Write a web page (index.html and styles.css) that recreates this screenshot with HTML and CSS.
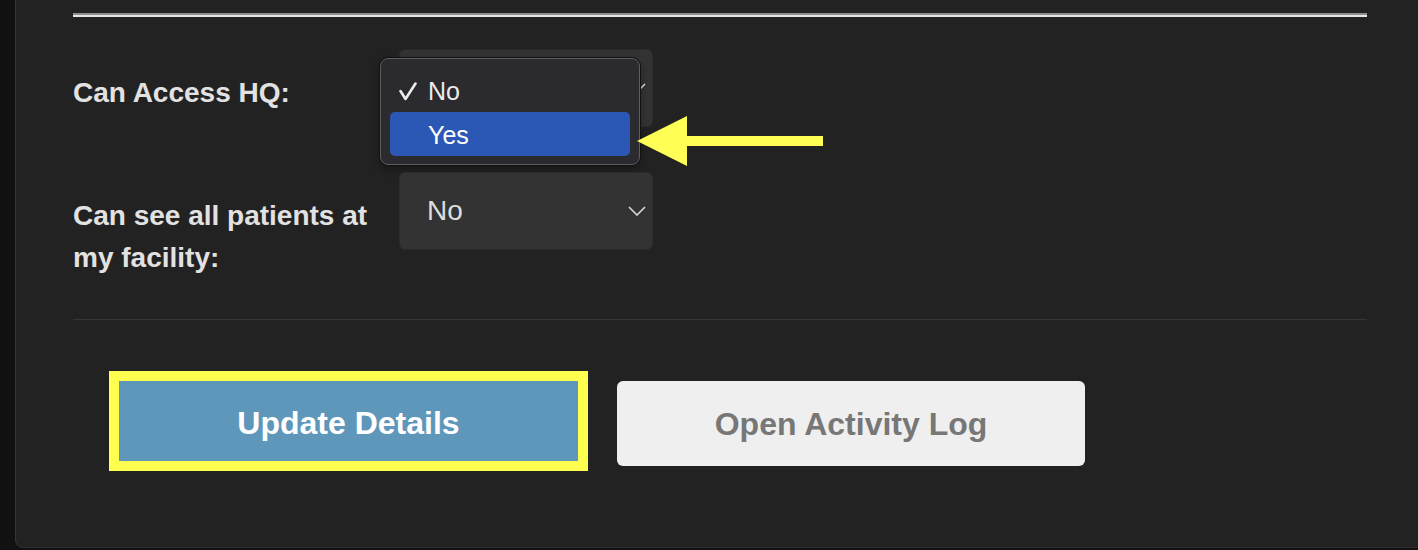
FILE: index.html
```html
<!DOCTYPE html>
<html lang="en">
<head>
<meta charset="utf-8">
<title>User Details</title>
<link rel="stylesheet" href="styles.css">
</head>
<body>
<div class="panel">
  <hr class="top-rule">
  <div class="row row-first">
    <div class="label">Can Access HQ:</div>
    <div class="select">
      <span class="select-value">No</span>
      <svg class="chev" width="18" height="10" viewBox="0 0 18 10"><polyline points="1,1 9,9 17,1" fill="none" stroke="#d8d8d8" stroke-width="1.6"/></svg>
    </div>
    <div class="menu">
      <div class="menu-item">
        <svg class="check" width="18" height="19" viewBox="0 0 18 19"><polyline points="1.5,9 6.5,17 16.5,1.5" fill="none" stroke="#ececec" stroke-width="2.6" stroke-linecap="round" stroke-linejoin="round"/></svg>
        <span>No</span>
      </div>
      <div class="menu-item active"><span>Yes</span></div>
    </div>
    <svg class="arrow" width="187" height="51" viewBox="0 0 187 51"><polygon points="0,25 50,0 50,20 186,20 186,30 50,30 50,50" fill="#ffff55"/></svg>
  </div>
  <div class="row row-second">
    <div class="label">Can see all patients at my facility:</div>
    <div class="select">
      <span class="select-value">No</span>
      <svg class="chev" width="18" height="10" viewBox="0 0 18 10"><polyline points="1,1 9,9 17,1" fill="none" stroke="#d8d8d8" stroke-width="1.6"/></svg>
    </div>
  </div>
  <hr class="sep">
  <div class="actions">
    <button class="btn btn-primary">Update Details</button>
    <button class="btn btn-secondary">Open Activity Log</button>
  </div>
</div>
</body>
</html>
```
FILE: styles.css
```css
html, body {
  margin: 0;
  padding: 0;
  background: #111111;
  font-family: "Liberation Sans", Arial, sans-serif;
}

.panel {
  margin-left: 15px;
  height: 548px;
  background: #222222;
  border-left: 1px solid #343434;
  border-bottom: 1px solid #2e2e2e;
  border-bottom-left-radius: 8px;
  padding: 13px 51px 0 57px;
  box-sizing: border-box;
  overflow: hidden;
}

.top-rule {
  margin: 0;
  height: 0;
  border: none;
  border-top: 2px solid #8e8e8e;
  border-bottom: 2px solid #e6e6e6;
}

.row {
  display: flex;
  align-items: flex-start;
  position: relative;
}

.row-first {
  margin-top: 32px;
}

.row-second {
  margin-top: 45px;
}

.label {
  width: 326px;
  flex: none;
  padding-top: 23px;
  font-size: 28px;
  font-weight: bold;
  line-height: 42px;
  color: #e2e2e2;
  box-sizing: border-box;
}

.select {
  width: 254px;
  height: 78px;
  box-sizing: border-box;
  background: #333333;
  border: 1px solid #2b2b2b;
  border-radius: 6px;
  display: flex;
  align-items: center;
  justify-content: space-between;
  padding: 0 6px 0 27px;
}

.select-value {
  font-size: 28px;
  color: #dedede;
}

.row-first .select-value {
  visibility: hidden;
}

.chev {
  display: block;
}

.menu {
  position: absolute;
  left: 307px;
  top: 9px;
  width: 260px;
  height: 107px;
  box-sizing: border-box;
  background: #2b2a2e;
  border: 1px solid #5e5e62;
  border-radius: 8px;
  box-shadow: 0 0 0 1px #111, 0 4px 10px rgba(0, 0, 0, 0.35);
  padding: 9px 9px;
}

.menu-item {
  height: 44px;
  display: flex;
  align-items: center;
  padding-left: 38px;
  padding-top: 2px;
  box-sizing: border-box;
  position: relative;
  font-size: 25px;
  color: #ececec;
  border-radius: 5px;
}

.menu-item.active {
  background: #2c58b5;
  color: #ffffff;
}

.check {
  position: absolute;
  left: 9px;
  top: 14px;
}

.arrow {
  position: absolute;
  left: 564px;
  top: 67px;
}

.sep {
  margin: 40px 0 0 0;
  height: 0;
  border: none;
  border-top: 1px solid #363636;
}

.actions {
  display: flex;
  align-items: flex-start;
  gap: 29px;
  margin-top: 51px;
  padding-left: 36px;
}

.btn {
  font-family: "Liberation Sans", Arial, sans-serif;
  font-size: 32px;
  font-weight: bold;
  cursor: pointer;
  box-sizing: border-box;
  padding: 0;
}

.btn-primary {
  width: 479px;
  height: 100px;
  padding-top: 5px;
  background: #5f97bb;
  color: #ffffff;
  border: 10px solid #ffff4f;
}

.btn-secondary {
  margin-top: 10px;
  width: 468px;
  height: 85px;
  padding-top: 2px;
  background: #efefef;
  color: #777777;
  border: none;
  border-radius: 6px;
}
```
